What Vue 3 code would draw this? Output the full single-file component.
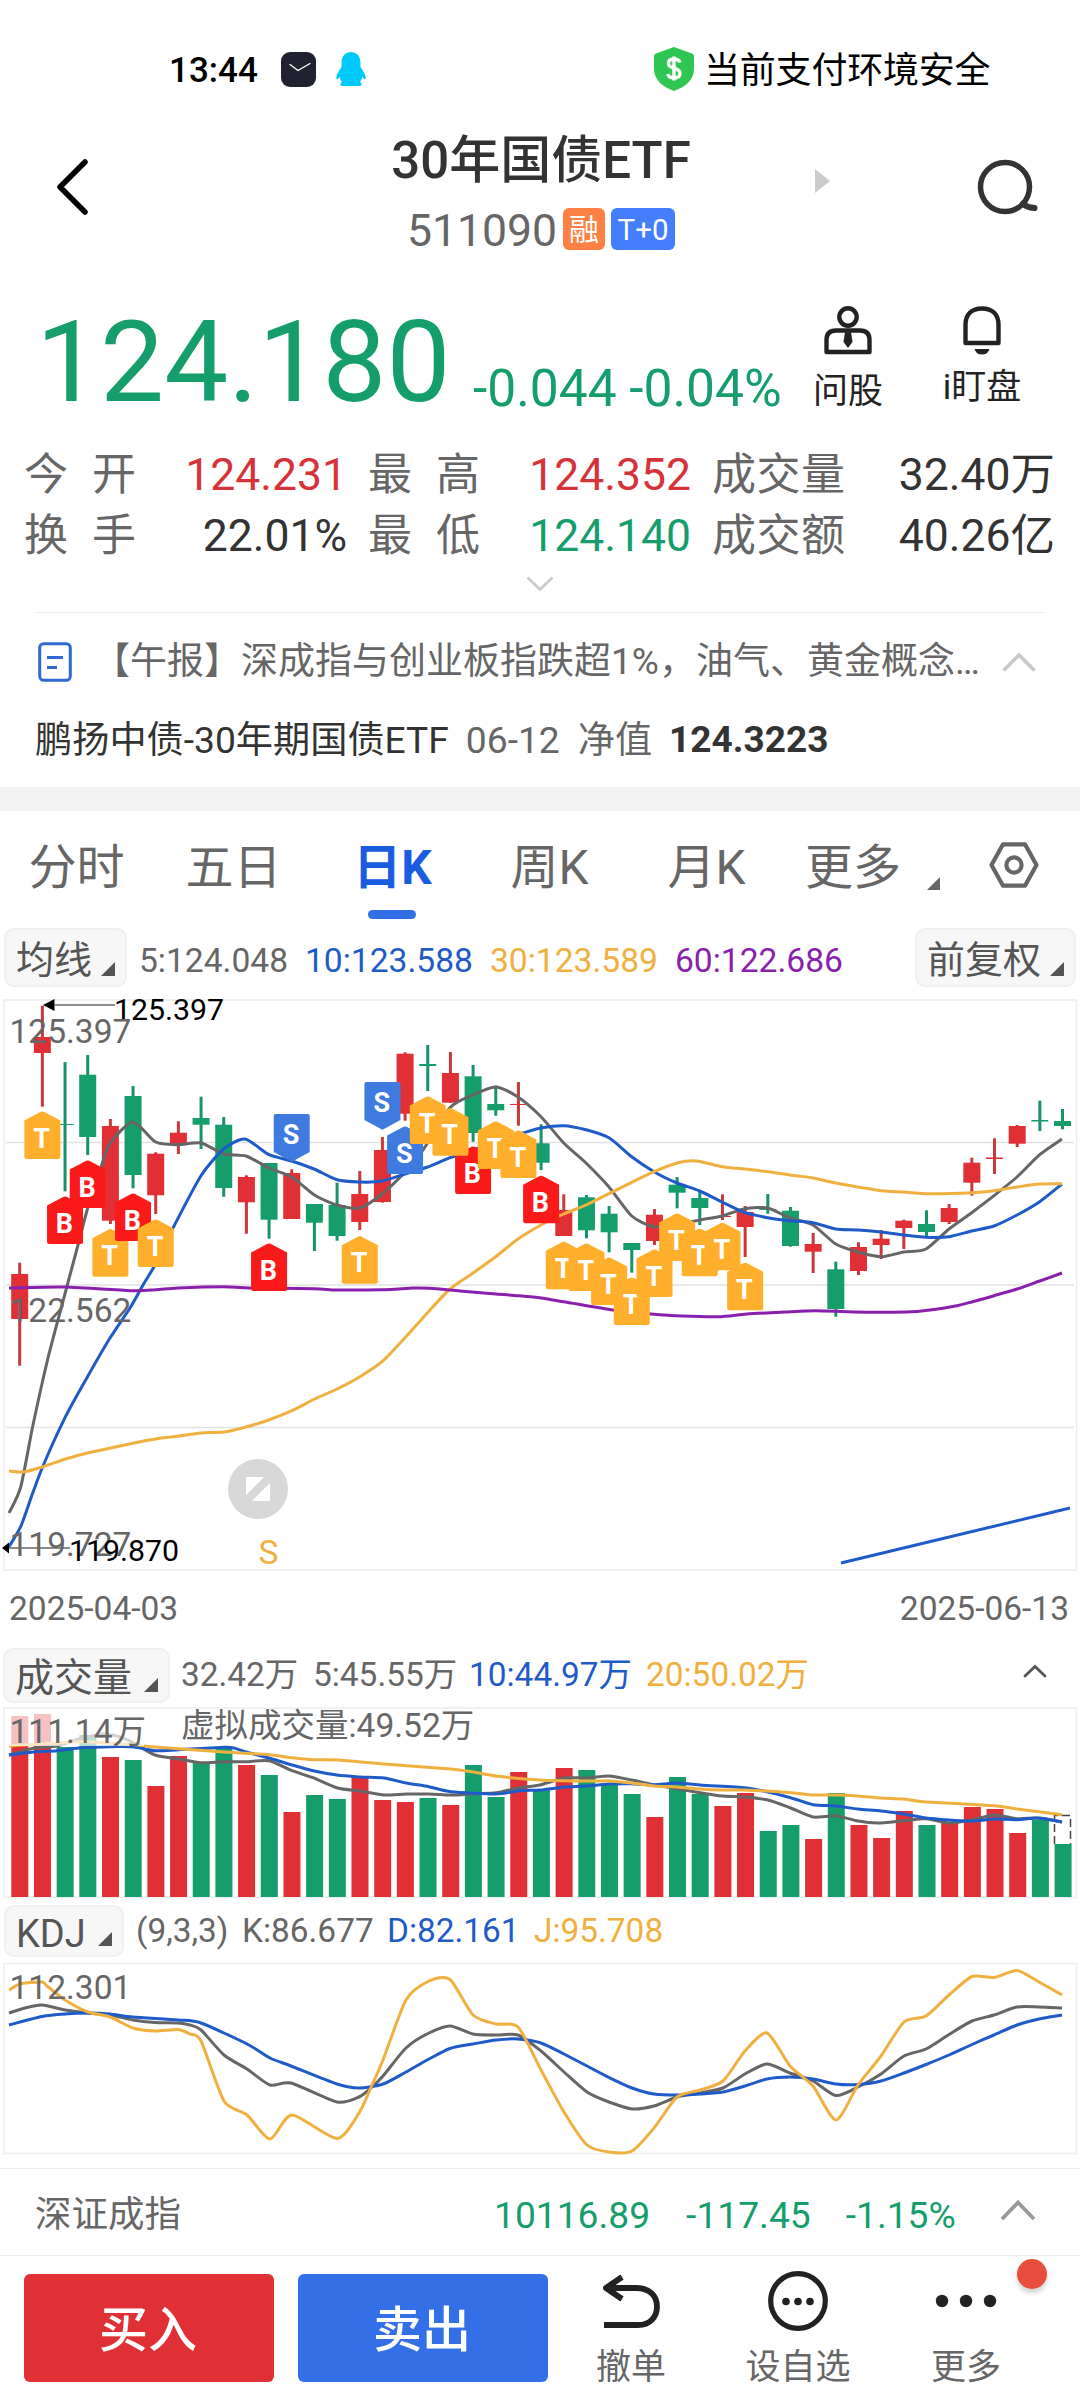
<script setup>
const STEP = 22.67
const FIRST = 19.7
const cx = (i) => FIRST + i * STEP

const stats = [
  { label: ['今', '开'], value: '124.231', tone: 'up' },
  { label: ['最', '高'], value: '124.352', tone: 'up' },
  { label: ['成', '交', '量'], value: '32.40万', tone: 'flat' },
  { label: ['换', '手'], value: '22.01%', tone: 'flat' },
  { label: ['最', '低'], value: '124.140', tone: 'down' },
  { label: ['成', '交', '额'], value: '40.26亿', tone: 'flat' },
]

const tabs = ['分时', '五日', '日K', '周K', '月K']

// [direction, high, body top, body bottom, low]
const candles = [
  ['r', 1262.7, 1274, 1319, 1365.7], ['r', 1005.7, 1037, 1053, 1106.7], ['g', 1062, 1124, 1125, 1191.3],
  ['g', 1055, 1074.7, 1137, 1155], ['r', 1119, 1126, 1220.7, 1224], ['g', 1086, 1096, 1175, 1188.3],
  ['r', 1152.3, 1153.7, 1195.3, 1214], ['r', 1121.3, 1132.7, 1143.7, 1154], ['g', 1096.7, 1118, 1124.7, 1149],
  ['g', 1117, 1124.7, 1188, 1196.7], ['r', 1175.3, 1177, 1202.3, 1233.7], ['g', 1163, 1163, 1219.7, 1238.7],
  ['r', 1169.3, 1173, 1219, 1219], ['g', 1204, 1204, 1222.7, 1251], ['g', 1182.7, 1205, 1236, 1240.7],
  ['r', 1171, 1194, 1222, 1230], ['r', 1137, 1150, 1202, 1202.7], ['r', 1052.3, 1053.7, 1113.7, 1120.7],
  ['g', 1045, 1064, 1066, 1091], ['r', 1052, 1073, 1102.7, 1102.7], ['g', 1065, 1076.3, 1133, 1141.7],
  ['g', 1085.7, 1104, 1110.3, 1115.7], ['r', 1082, 1104, 1105, 1125.7], ['g', 1124.3, 1143.3, 1162.7, 1170],
  ['r', 1194.3, 1210, 1236, 1236], ['g', 1195, 1197.3, 1230.3, 1238.3], ['g', 1206, 1213.7, 1232.3, 1252.3],
  ['g', 1243, 1243, 1250, 1272.7], ['r', 1209, 1214.7, 1241, 1245], ['g', 1177, 1184.7, 1192.7, 1208.3],
  ['g', 1190.7, 1198, 1208, 1225], ['r', 1194.3, 1216, 1217, 1220], ['r', 1206, 1212, 1227, 1257],
  ['g', 1194, 1209, 1210, 1213.7], ['g', 1207, 1210.7, 1246, 1246.7], ['r', 1233, 1244, 1251.7, 1273],
  ['g', 1261.7, 1269.3, 1309, 1316.7], ['r', 1242.3, 1247, 1271, 1275], ['r', 1230, 1238.7, 1245, 1259],
  ['r', 1219.7, 1220.7, 1228, 1249], ['g', 1210.3, 1224, 1232, 1237], ['r', 1204, 1208, 1222, 1224],
  ['r', 1157.7, 1162.7, 1182.7, 1195.7], ['r', 1138.3, 1157.5, 1159, 1174], ['r', 1125, 1126, 1143.7, 1147],
  ['g', 1100.7, 1120, 1121.5, 1131], ['g', 1109, 1121, 1126, 1129.3],
]

// [letter, candle index, top, points down]
const markers = [
  ['T', 1, 1111], ['B', 2, 1196], ['B', 3, 1160], ['T', 4, 1228.7], ['B', 5, 1193], ['T', 6, 1219],
  ['B', 11, 1243], ['S', 12, 1114, true], ['T', 15, 1235.7], ['S', 16, 1082, true], ['S', 17, 1126],
  ['B', 20, 1146], ['T', 18, 1096], ['T', 19, 1107.7], ['T', 21, 1121], ['T', 22, 1130], ['B', 23, 1175.3],
  ['T', 24, 1241.3], ['T', 25, 1243], ['T', 26, 1257], ['T', 27, 1277], ['T', 28, 1249], ['T', 29, 1213],
  ['T', 30, 1228.3], ['T', 31, 1222.3], ['T', 32, 1262.3],
]
const markerFill = { T: '#ffaf2b', B: '#fb1a1a', S: '#3f7ae0' }

const volumes = [
  ['r', 1716], ['r', 1714], ['g', 1747], ['g', 1735], ['r', 1757], ['g', 1760], ['r', 1786], ['r', 1756], ['g', 1762.7],
  ['g', 1748], ['r', 1765], ['g', 1775], ['r', 1812], ['g', 1795], ['g', 1799], ['r', 1777], ['r', 1800], ['r', 1802],
  ['g', 1798], ['r', 1805], ['g', 1765], ['g', 1797], ['r', 1772], ['g', 1789], ['r', 1768], ['g', 1770], ['g', 1783],
  ['g', 1794], ['r', 1817], ['g', 1777], ['g', 1794], ['r', 1806], ['r', 1793], ['g', 1831], ['g', 1825], ['r', 1839],
  ['g', 1793], ['r', 1825], ['r', 1838], ['r', 1811], ['g', 1825], ['r', 1823], ['r', 1807], ['r', 1809], ['r', 1833],
  ['g', 1820], ['g', 1844],
]

// Lightly smoothed line through a flat list of x,y pairs
function curve(flat) {
  const p = []
  for (let i = 0; i < flat.length; i += 2) p.push([flat[i], flat[i + 1]])
  const t = 0.12
  let d = `M${p[0][0]} ${p[0][1]}`
  for (let i = 0; i < p.length - 1; i++) {
    const a = p[i - 1] || p[i]
    const b = p[i]
    const c = p[i + 1]
    const e = p[i + 2] || c
    d += `C${(b[0] + (c[0] - a[0]) * t).toFixed(1)} ${(b[1] + (c[1] - a[1]) * t).toFixed(1)} ${(c[0] - (e[0] - b[0]) * t).toFixed(1)} ${(c[1] - (e[1] - b[1]) * t).toFixed(1)} ${c[0]} ${c[1]}`
  }
  return d
}

const GRAY = '#666'
const BLUE = '#1f5bc8'
const GOLD = '#f0b040'
const PURPLE = '#8a1fae'

const priceLines = [
  [GRAY, curve([9, 1513, 20.7, 1487, 33, 1425, 48, 1358, 62, 1305, 78, 1245, 87.7, 1208, 100, 1170, 110.3, 1143, 133, 1122, 155.7, 1142, 178, 1144.7, 201, 1143, 223.7, 1154, 246, 1156, 269, 1168, 291.7, 1177, 314, 1194.7, 337, 1205, 359.7, 1208, 382, 1194, 405, 1172, 423, 1150, 450, 1107.7, 473, 1095, 495.7, 1087, 518, 1097, 541, 1116.7, 563.7, 1143, 586, 1163, 609, 1187, 631.7, 1216, 654, 1226.7, 677, 1224, 699.7, 1220, 722, 1216, 745, 1208.7, 767.7, 1208, 790, 1218, 813, 1225, 835.7, 1244, 858, 1252, 881, 1256.7, 903.7, 1252, 926, 1249, 949, 1229, 971.7, 1212.7, 994, 1195.7, 1017, 1177, 1039.7, 1154.7, 1062, 1139])],
  [BLUE, curve([9, 1546.7, 20.7, 1526.7, 32, 1495, 43, 1466, 65.5, 1416.7, 87.5, 1376.7, 110, 1338, 130, 1308, 143, 1285, 154, 1266.7, 173, 1228, 201, 1175.7, 223.7, 1149, 245, 1139, 269, 1154.7, 291.7, 1161, 314, 1169, 337, 1179.7, 359.7, 1182, 382, 1181, 405, 1174, 427.7, 1167, 450, 1157.7, 473, 1150, 496, 1141, 523, 1133, 541, 1128, 563.7, 1125.7, 586, 1129.7, 609, 1137.7, 631.7, 1156.7, 654, 1171.7, 677, 1183, 699.7, 1191, 722, 1202, 745, 1212.7, 767.7, 1217.7, 790, 1220.7, 813, 1222.7, 835.7, 1229, 858, 1230, 881, 1232, 903.7, 1235, 926, 1237.3, 949, 1236.7, 971.7, 1231, 994, 1226, 1017, 1215, 1039.7, 1201.7, 1062, 1184])],
  [GOLD, curve([9, 1471, 22.7, 1472, 43, 1466.7, 65.5, 1459, 87.5, 1453, 134, 1443, 157, 1438.7, 179, 1436, 201, 1433, 224, 1432, 246, 1427, 268.6, 1420, 292, 1410.7, 314.7, 1399, 337, 1389, 359.5, 1377, 382, 1361.7, 405.6, 1337, 430, 1310, 450, 1289, 473, 1273, 495.7, 1256.7, 518, 1239, 541, 1225, 563.7, 1214, 586, 1205, 609, 1193.7, 631.7, 1182.3, 654, 1171.7, 677, 1163, 696.7, 1161, 722, 1166.7, 745, 1169, 767.7, 1171.7, 790, 1175, 813, 1178, 835.7, 1183, 881, 1190.7, 903.7, 1192, 926, 1193.7, 971.7, 1192.7, 994, 1190.7, 1017, 1187, 1039.7, 1184, 1062, 1183.7])],
  [PURPLE, curve([9, 1288, 65, 1287, 133, 1290.7, 155.7, 1289.7, 178, 1288, 223.7, 1286.7, 250, 1288, 314, 1288.7, 337, 1290, 382, 1289.7, 413, 1288, 430, 1288.3, 460, 1291, 496, 1294, 518, 1295.7, 541, 1298, 563.7, 1301.7, 613, 1310, 651, 1314, 682, 1316, 718, 1316.7, 747, 1314, 785, 1312, 816, 1310.7, 854, 1312, 906, 1312, 930, 1310, 957, 1305.7, 971.7, 1302, 994, 1295.7, 1017, 1289, 1039.7, 1281, 1062, 1273])],
  [BLUE, 'M841 1563L1070 1508'],
]

const volumeLines = [
  [GRAY, curve([9, 1755, 34, 1748, 57, 1746, 79, 1739, 103, 1734, 119, 1736.7, 134, 1743, 155, 1755, 179, 1759, 201, 1762.7, 224, 1761.7, 246, 1761.7, 269, 1760.7, 292, 1770.7, 313, 1777.7, 337.5, 1788, 360, 1791, 384, 1795, 406, 1794, 429, 1794, 451, 1795, 473.5, 1793.7, 496, 1792.7, 519, 1787.7, 540, 1785, 564, 1778, 586.5, 1778, 609, 1776, 631.6, 1780, 654, 1784.7, 677, 1788.7, 700, 1792.7, 722.5, 1796, 745, 1797, 768, 1800, 790.7, 1808, 813, 1817, 835.5, 1815.7, 858, 1821, 877.5, 1823, 903.6, 1820.7, 926, 1818.7, 949, 1823, 972, 1820, 994.5, 1815, 1017, 1818.7, 1039, 1818, 1062, 1822])],
  [BLUE, curve([9, 1755, 34, 1752, 57, 1750.7, 79, 1748, 110, 1746.7, 134, 1747, 155, 1750.7, 179, 1749.7, 224, 1747.3, 234, 1748, 246, 1752, 269, 1758, 292, 1765, 313, 1770.7, 337, 1775, 360, 1777, 384, 1778, 406, 1783, 429, 1786.7, 451, 1791.7, 496, 1794, 519, 1790.7, 540, 1790, 564, 1787, 586.5, 1786, 609, 1784, 631.6, 1783.7, 654, 1784.7, 677, 1783, 700, 1785, 745, 1787.7, 768, 1792, 790.7, 1797.7, 813, 1804.7, 835.5, 1806, 858, 1809, 881, 1811, 903.6, 1814, 926, 1818, 949, 1820, 972, 1821, 994.5, 1819, 1017, 1819.7, 1036, 1818, 1050, 1819.7, 1062, 1822])],
  [GOLD, curve([9, 1746, 79, 1741.7, 103, 1742.7, 138, 1745, 151.5, 1746.7, 224, 1752, 269, 1754.7, 292, 1757.7, 313, 1759.7, 337.5, 1760, 384, 1764, 451, 1769, 473.5, 1772, 496, 1776, 540, 1780, 586.5, 1781, 609, 1781, 631.6, 1783, 654, 1786, 677, 1787, 700, 1789, 722.5, 1790, 745, 1790, 790.7, 1792.7, 813, 1795, 835.5, 1795, 858, 1796, 881, 1798, 903.6, 1799, 926, 1802, 994.5, 1805.7, 1017, 1809, 1062, 1814.7])],
]

const kdjLines = [
  [GRAY, curve([9, 2013, 25, 2008, 42, 2005, 65, 2010, 88, 2013, 110, 2015, 133, 2020, 155, 2022.5, 178, 2023, 190, 2025, 201, 2030, 224, 2055, 247, 2069, 270, 2085, 291, 2083, 337, 2102, 359, 2097, 372, 2087, 383, 2076, 406, 2048, 429, 2033, 450, 2026, 473, 2034, 496, 2035, 518, 2035, 541, 2051, 564, 2072, 587, 2092, 609, 2102, 632, 2109, 654, 2106, 677, 2097, 700, 2093, 723, 2088, 745, 2074, 767, 2064, 790, 2073, 813, 2081, 836, 2095.5, 858, 2087, 881, 2074, 904, 2056, 926, 2049, 949, 2034.5, 972, 2021, 994, 2015, 1017, 2007, 1039, 2007, 1062, 2008])],
  [BLUE, curve([9, 2025, 42, 2016.5, 65, 2014, 88, 2013, 110, 2014, 133, 2017, 178, 2020, 201, 2023, 247, 2044, 270, 2058, 291, 2066, 337, 2084, 359, 2088, 383, 2084, 406, 2072, 429, 2059, 450, 2048.5, 473, 2044, 496, 2040, 518, 2039, 541, 2043, 564, 2054, 587, 2066, 609, 2077.5, 632, 2088, 654, 2094, 677, 2095, 700, 2094, 723, 2092, 745, 2086, 767, 2079, 790, 2077, 813, 2079, 836, 2084, 858, 2084.5, 881, 2081, 904, 2073, 926, 2064.5, 949, 2055, 972, 2044.5, 994, 2035, 1017, 2025, 1039, 2019, 1062, 2015])],
  [GOLD, curve([9, 1990, 20, 1984, 42, 1982, 47, 1986, 65, 2000, 88, 2012, 110, 2017, 133, 2028, 155, 2031, 178, 2029.5, 190, 2034, 201, 2041, 224, 2101, 247, 2115, 270, 2139, 292, 2115, 337, 2138.5, 359, 2113, 372, 2085, 383, 2060, 406, 2000, 429, 1981, 450, 1979.5, 473, 2015, 496, 2024, 518, 2027, 541, 2070, 564, 2112, 587, 2145, 609, 2152, 632, 2151, 654, 2128, 677, 2097, 700, 2090, 723, 2081, 745, 2051, 767, 2033, 790, 2066, 813, 2086, 836, 2120, 858, 2085, 881, 2056, 904, 2022, 926, 2016, 949, 1995, 972, 1976.5, 994, 1977.5, 1017, 1970.5, 1039, 1982, 1062, 1995])],
]

const fill = { r: '#e03035', g: '#159e6b' }
const wick = { r: '#c8383c', g: '#16936a' }
</script>

<template>
  <div class="screen">
    <div class="status">
      <span class="clock">13:44</span>
      <svg class="st-app" width="35" height="35" viewBox="0 0 35 35">
        <rect width="35" height="35" rx="9" fill="#20232f" />
        <path d="M9 12.500L17 18.500L29 11.500" fill="none" stroke="#fff" stroke-width="1.300" stroke-linecap="round" />
      </svg>
      <svg class="st-qq" width="30" height="34" viewBox="0 0 30 34">
        <path d="M15 0C8.500 0 5.500 5 5.500 11v4C3 18.500 .5 22.500 .3 25.500c-.1 2 1.200 2.300 3.400-.6.400 2 1.200 3.600 2.300 5-2 .9-2.200 4.100.5 4.100h17c2.700 0 2.500-3.200.5-4.100 1.100-1.400 1.900-3 2.300-5 2.200 2.900 3.500 2.600 3.400.6-.2-3-2.700-7-5.200-10.500v-4C24.500 5 21.500 0 15 0z" fill="#00cafc" />
      </svg>
      <svg class="st-shield" width="40" height="44" viewBox="0 0 40 44">
        <path d="M20 0L38 6.500Q40 7.300 40 9V22C40 33 31 40 20 44C9 40 0 33 0 22V9Q0 7.300 2 6.500Z" fill="#2fc552" />
        <path d="M26 15.500C25 12.800 22.800 12 20 12C16.600 12 14.500 13.800 14.500 16.600C14.500 23 26 19.600 26 26.200C26 29.400 23.500 31 20 31C16.800 31 14.600 29.800 13.700 27M20 9.500V33.500" fill="none" stroke="#fff" stroke-width="3.400" />
      </svg>
      <span class="safe">当前支付环境安全</span>
    </div>

    <header class="header">
      <svg class="back" width="36" height="64" viewBox="0 0 36 64">
        <path d="M31 7L6 32L31 57" fill="none" stroke="#000" stroke-width="5.500" stroke-linecap="round" stroke-linejoin="round" />
      </svg>
      <div class="title-box">
        <div class="title">30年国债ETF</div>
        <div class="sub">
          <span class="code">511090</span>
          <span class="badge orange">融</span>
          <span class="badge blue">T+0</span>
        </div>
      </div>
      <svg class="next" width="15" height="24" viewBox="0 0 15 24"><path d="M0 0L15 12L0 24Z" fill="#ccc" /></svg>
      <svg class="search" width="64" height="60" viewBox="0 0 64 60">
        <circle cx="29" cy="30" r="24.500" fill="none" stroke="#333" stroke-width="5.500" />
        <path d="M47 46.500Q50.500 50.500 58.500 51" fill="none" stroke="#333" stroke-width="6" stroke-linecap="round" />
      </svg>
    </header>

    <section class="quote">
      <span class="price">124.180</span>
      <span class="change">-0.044 -0.04%</span>
      <div class="tool ask">
        <svg width="48" height="50" viewBox="0 0 48 50">
          <circle cx="24" cy="11" r="8.700" fill="none" stroke="#222" stroke-width="4.400" />
          <path d="M2.500 46V34Q2.500 24.500 12 24.500H36Q45.500 24.500 45.500 34V46Z" fill="none" stroke="#222" stroke-width="4.400" stroke-linejoin="round" />
          <path d="M21 26H27L28.500 36L24 42L19.500 36Z" fill="#222" />
        </svg>
        <span>问股</span>
      </div>
      <div class="tool watch">
        <svg width="42" height="50" viewBox="0 0 42 50">
          <path d="M4.500 37V19C4.500 8 11 2.500 21 2.500S37.500 8 37.500 19V37Z" fill="none" stroke="#222" stroke-width="4.400" stroke-linejoin="round" />
          <path d="M13.500 43H28.500Q27 48.500 21 48.500T13.500 43Z" fill="#222" />
        </svg>
        <span>i盯盘</span>
      </div>
    </section>

    <section class="stats">
      <template v-for="(s, i) in stats" :key="i">
        <div class="s-label"><span v-for="c in s.label" :key="c">{{ c }}</span></div>
        <div class="s-value" :class="s.tone">{{ s.value }}</div>
      </template>
    </section>
    <div class="more-row">
      <svg width="30" height="18" viewBox="0 0 30 18"><path d="M2.500 2.500L15 14.500L27.500 2.500" fill="none" stroke="#ccc" stroke-width="2.800" /></svg>
    </div>

    <div class="rule"></div>
    <div class="news">
      <svg width="34" height="40" viewBox="0 0 34 40">
        <rect x="1.700" y="1.700" width="30.600" height="36.600" rx="4" fill="none" stroke="#3169d3" stroke-width="3" />
        <path d="M9 15.500H25M9 25.500H19" stroke="#3169d3" stroke-width="3" />
      </svg>
      <span class="news-text">【午报】深成指与创业板指跌超1%，油气、黄金概念…</span>
      <svg class="news-up" width="36" height="22" viewBox="0 0 36 22"><path d="M2.500 19.500L18 4L33.500 19.500" fill="none" stroke="#c8c8c8" stroke-width="3.600" /></svg>
    </div>
    <div class="fund">
      <span class="f-name">鹏扬中债-30年期国债ETF</span>
      <span class="f-date">06-12</span>
      <span class="f-nav">净值</span>
      <b>124.3223</b>
    </div>
    <div class="band"></div>

    <nav class="tabs">
      <div v-for="t in tabs" :key="t" class="tab" :class="{ on: t === '日K' }">{{ t }}</div>
      <div class="tab-more">更多</div>
      <svg class="tab-tri" width="13" height="13" viewBox="0 0 13 13"><path d="M13 0V13H0Z" fill="#666" /></svg>
      <svg class="hex" width="50" height="46" viewBox="0 0 50 46">
        <path d="M14 2.300H36L47.500 23L36 43.700H14L2.500 23Z" fill="none" stroke="#666" stroke-width="4.200" stroke-linejoin="round" />
        <circle cx="25" cy="23" r="7.600" fill="none" stroke="#666" stroke-width="4.200" />
      </svg>
    </nav>

    <div class="legend ma">
      <span class="pill p1">均线<i></i></span>
      <span class="lg1">5:124.048</span>
      <span class="lg2 c-blue">10:123.588</span>
      <span class="lg3 c-gold">30:123.589</span>
      <span class="lg4 c-purple">60:122.686</span>
      <span class="pill p2">前复权<i></i></span>
    </div>

    <svg class="chart" width="1080" height="590" viewBox="0 990 1080 590">
      <rect x="4" y="1000" width="1072.500" height="570" fill="none" stroke="#eee" stroke-width="1.600" />
      <path d="M6 1142.500H1074M6 1285H1074M6 1427.500H1074" stroke="#e2e2e2" stroke-width="1.300" />
      <circle cx="258" cy="1489" r="30" fill="#d8d8d8" />
      <path d="M246 1477H264L246 1495ZM270 1483V1501H252Z" fill="#fff" />
      <text x="258.500" y="1564" class="ax" :fill="GOLD">S</text>
      <g v-for="(c, i) in candles" :key="i">
        <rect :x="cx(i) - 1.500" :y="c[1]" width="3" :height="c[4] - c[1]" :fill="wick[c[0]]" />
        <rect :x="cx(i) - 8.500" :y="c[2]" width="17" :height="c[3] - c[2]" :fill="fill[c[0]]" />
      </g>
      <path v-for="(l, i) in priceLines" :key="i" :d="l[1]" fill="none" :stroke="l[0]" stroke-width="3" stroke-linejoin="round" />
      <g v-for="(m, i) in markers" :key="i" :transform="`translate(${cx(m[1])} ${m[2]})`">
        <path v-if="m[3]" d="M-16 0H16Q18 0 18 2V38L1.500 47Q0 48 -1.500 47L-18 38V2Q-18 0 -16 0Z" :fill="markerFill[m[0]]" />
        <path v-else d="M-16 48H16Q18 48 18 46V9.500L1.500 .8Q0 0 -1.500 .8L-18 9.500V46Q-18 48 -16 48Z" :fill="markerFill[m[0]]" />
        <text x="-0.700" :y="m[3] ? 30 : 36.500" class="mk" text-anchor="middle">{{ m[0] }}</text>
      </g>
      <path d="M43 1005L54.500 999V1011Z" fill="#000" />
      <path d="M54 1005H115" stroke="#666" stroke-width="1.600" />
      <text x="114" y="1020" class="tag">125.397</text>
      <text x="9.500" y="1042.500" class="ax" fill="#666">125.397</text>
      <text x="9.500" y="1322" class="ax" fill="#666">122.562</text>
      <text x="9.500" y="1555.500" class="ax" fill="#666">119.727</text>
      <path d="M2 1548L9 1542.500V1553.500Z" fill="#000" />
      <path d="M9 1548H70" stroke="#666" stroke-width="1.600" />
      <text x="69" y="1560.500" class="tag">119.870</text>
    </svg>

    <div class="dates"><span>2025-04-03</span><span>2025-06-13</span></div>

    <div class="legend vol">
      <span class="pill p3">成交量<i></i></span>
      <span class="v1">32.42万</span>
      <span class="v2">5:45.55万</span>
      <span class="v3 c-blue">10:44.97万</span>
      <span class="v4 c-gold">20:50.02万</span>
      <svg class="v-up" width="24" height="14" viewBox="0 0 24 14"><path d="M2 12L12 2.500L22 12" fill="none" stroke="#555" stroke-width="2.800" stroke-linecap="round" /></svg>
    </div>

    <svg class="chart" width="1080" height="196" viewBox="0 1704 1080 196">
      <rect x="4" y="1708" width="1072.500" height="189.500" fill="none" stroke="#eee" stroke-width="1.600" />
      <rect v-for="(v, i) in volumes" :key="i" :x="11.300 + i * 22.680" :y="v[1]" width="17" :height="1897 - v[1]" :fill="fill[v[0]]" />
      <path d="M1054.500 1844V1815.500H1070.500V1844" fill="none" stroke="#444" stroke-width="1.500" stroke-dasharray="8 4" />
      <path v-for="(l, i) in volumeLines" :key="i" :d="l[1]" fill="none" :stroke="l[0]" stroke-width="3" stroke-linejoin="round" />
      <rect x="5" y="1709" width="139" height="37" fill="#fff" opacity="0.7" />
      <text x="9.500" y="1742.500" class="ax" fill="#666">111.14万</text>
      <text x="181" y="1736.500" class="ax" fill="#666">虚拟成交量:49.52万</text>
    </svg>

    <div class="legend kdj">
      <span class="pill p4">KDJ<i></i></span>
      <span class="k0">(9,3,3)</span>
      <span class="k1">K:86.677</span>
      <span class="k2 c-blue">D:82.161</span>
      <span class="k3 c-gold">J:95.708</span>
    </div>

    <svg class="chart" width="1080" height="208" viewBox="0 1960 1080 208">
      <rect x="4" y="1963.500" width="1072.500" height="190" fill="none" stroke="#eee" stroke-width="1.600" />
      <path v-for="(l, i) in kdjLines" :key="i" :d="l[1]" fill="none" :stroke="l[0]" stroke-width="3" stroke-linejoin="round" />
      <text x="9.500" y="1998.500" class="ax" fill="#666">112.301</text>
    </svg>

    <div class="index">
      <span class="i-name">深证成指</span>
      <span>10116.89</span>
      <span class="i2">-117.45</span>
      <span class="i3">-1.15%</span>
      <svg width="36" height="22" viewBox="0 0 36 22"><path d="M2 20L18 3.500L34 20" fill="none" stroke="#999" stroke-width="3.800" /></svg>
    </div>

    <footer class="bar">
      <button class="buy">买入</button>
      <button class="sell">卖出</button>
      <div class="act a1">
        <svg width="62" height="62" viewBox="0 0 62 62">
          <path d="M22 7L6 18L22 29M7 18H36C50 18 57 26 57 36.500S50 55 38 55H4" fill="none" stroke="#222" stroke-width="5.800" stroke-linejoin="round" />
        </svg>
        <span>撤单</span>
      </div>
      <div class="act a2">
        <svg width="62" height="62" viewBox="0 0 62 62">
          <circle cx="31" cy="31" r="27.300" fill="none" stroke="#222" stroke-width="5.200" />
          <circle cx="19" cy="31.500" r="3.800" fill="#222" /><circle cx="31" cy="31.500" r="3.800" fill="#222" /><circle cx="43" cy="31.500" r="3.800" fill="#222" />
        </svg>
        <span>设自选</span>
      </div>
      <div class="act a3">
        <svg width="62" height="62" viewBox="0 0 62 62">
          <circle cx="7" cy="31" r="6.200" fill="#222" /><circle cx="31" cy="31" r="6.200" fill="#222" /><circle cx="55" cy="31" r="6.200" fill="#222" />
        </svg>
        <span>更多</span>
        <em class="dot"></em>
      </div>
    </footer>
  </div>
</template>

<style>
body { background: #fff; }
</style>

<style scoped>
.screen {
  width: 1080px; height: 2400px; overflow: hidden; background: #fff; color: #333;
  font-family: Roboto, "Noto Sans CJK SC", sans-serif;
}
svg { display: block; flex: none; }
span, b { white-space: nowrap; }

.status { display: flex; align-items: center; height: 130px; padding: 8px 0 0 169px; box-sizing: border-box; color: #000; }
.clock { width: 112px; font-size: 35px; font-weight: 500; line-height: 40px; padding-top: 3px; }
.st-qq { margin-left: 20px; }
.st-shield { margin-left: 288px; }
.safe { margin-left: 10px; font-size: 36px; line-height: 40px; padding-top: 4px; letter-spacing: -0.2px; }

.header { display: flex; align-items: flex-start; height: 150px; }
.back { margin: 25px 0 0 54px; }
.title-box { width: 700px; margin-left: 101px; display: flex; flex-direction: column; align-items: center; }
.title { height: 60px; line-height: 61px; font-size: 51px; font-weight: 500; }
.sub { display: flex; align-items: center; height: 42px; margin-top: 18px; }
.code { font-size: 44.500px; line-height: 42px; color: #666; padding-top: 4px; }
.badge { height: 42px; border-radius: 6px; margin-left: 6px; color: #fff; font-size: 30px; line-height: 44px; text-align: center; }
.badge.blue { font-size: 29.500px; }
.orange { width: 42px; background: #fd8045; }
.blue { width: 64px; background: #447efc; }
.next { margin: 39px 0 0 -76px; }
.search { margin: 27px 0 0 146px; }

.quote { display: flex; align-items: flex-start; height: 160px; }
.price { width: 434px; padding-left: 36px; font-size: 114px; line-height: 164px; color: #159e6b; }
.change { width: 333px; margin-left: 3px; font-size: 51.500px; line-height: 217px; color: #159e6b; }
.tool { display: flex; flex-direction: column; align-items: center; width: 120px; margin-top: 26px; color: #222; font-size: 35px; }
.tool span { line-height: 44px; margin-top: 14px; }
.ask { margin-left: -18px; }
.watch { margin-left: 14px; }
.watch span { margin-top: 10px; }

.stats {
  display: grid; grid-template-columns: 112px 209px 135px 211px 154px 210px; grid-auto-rows: 61px;
  padding: 5px 0 0 24px; font-size: 44px; line-height: 61px;
}
.s-label { display: flex; justify-content: space-between; color: #666; }
.s-label:nth-child(6n + 3) { padding-left: 23px; }
.s-label:nth-child(6n + 5) { padding-left: 21px; }
.s-value { text-align: right; font-size: 44.500px; }
.s-value:nth-child(6n + 2) { position: relative; left: 2px; }
.up { color: #d6323a; }
.down { color: #159e6b; }
.flat { color: #333; }
.more-row { height: 45px; display: flex; justify-content: center; }
.more-row svg { margin-top: 8px; }

.rule { height: 1px; margin: 0 35px; background: #ececec; }
.news { display: flex; align-items: center; height: 98px; padding-left: 38px; }
.news-text { margin-left: 21px; width: 891px; font-size: 37px; line-height: 40px; color: #666; }
.news-up { margin-left: 17px; }
.fund { display: flex; height: 76px; padding-left: 35px; font-size: 37.200px; line-height: 58px; color: #333; }
.f-date, .f-nav { color: #666; }
.f-date { margin-left: 17px; }
.f-nav { margin-left: 18px; }
.fund b { margin-left: 17px; font-weight: 700; font-size: 37px; }
.band { height: 24px; background: #f3f3f3; }

.tabs { display: flex; align-items: flex-start; height: 114px; font-size: 48px; line-height: 114px; color: #666; }
.tab { position: relative; width: 157px; text-align: center; }
.tab:nth-child(-n + 2) { left: -2px; }
.on { color: #1a5ce0; font-weight: 700; }
.on::after { content: ""; position: absolute; left: 54px; top: 99px; width: 48px; height: 9px; border-radius: 5px; background: #326fe6; }
.tab-more { margin-left: 20px; }
.tab-tri { margin: 66px 0 0 26px; }
.hex { margin: 31px 0 0 49px; }

.legend { display: flex; font-size: 33.600px; color: #666; }
.ma { height: 65px; line-height: 72px; }
.pill {
  position: relative; box-sizing: border-box; flex: none; border: 2px solid #f0f0f0; border-radius: 10px;
  background: #f7f7f7; color: #555; font-size: 38px;
}
.pill i { position: absolute; right: 10px; bottom: 9px; width: 14px; height: 14px; background: #555; clip-path: polygon(100% 0, 100% 100%, 0 100%); }
.p1 { width: 123px; height: 59px; margin: 3px 0 0 4px; padding-left: 10px; line-height: 60px; }
.p2 { width: 161px; height: 59px; margin: 3px 0 0 72px; padding-left: 10px; line-height: 60px; }
.lg1 { width: 166px; margin-left: 12px; }
.lg2 { width: 185px; }
.lg3 { width: 185px; }
.lg4 { width: 168px; }
.c-blue { color: #1f5bc8; }
.c-gold { color: #f0b040; }
.c-purple { color: #8a1fae; }

.chart text { font-family: Roboto, "Noto Sans CJK SC", sans-serif; }
.ax { font-size: 33.500px; }
.tag { font-size: 30.300px; fill: #000; }
.mk { font-size: 27px; font-weight: 700; fill: #fff; }

.dates { display: flex; justify-content: space-between; height: 60px; padding: 0 11px 0 9px; font-size: 33.500px; line-height: 58px; color: #666; }

.vol { height: 64px; font-size: 33.400px; line-height: 70px; }
.p3 { width: 167px; height: 55px; margin: 8px 0 0 3px; padding-left: 10px; font-size: 39px; line-height: 57px; }
.v1 { width: 132px; margin-left: 11px; }
.v2 { width: 156px; }
.v3 { width: 177px; }
.v4 { width: 180px; }
.v-up { margin: 24px 0 0 197px; }

.kdj { height: 60px; font-size: 33.400px; line-height: 62px; }
.p4 { width: 120px; height: 52px; margin: 5px 0 0 4px; padding-left: 10px; line-height: 54px; }
.k0 { width: 106px; margin-left: 12px; }
.k1 { width: 145px; }
.k2 { width: 147px; }

.index { display: flex; align-items: center; height: 87px; box-sizing: border-box; border-top: 1px solid #eee; padding: 6px 0 0 35px; font-size: 37.200px; line-height: 80px; color: #159e6b; }
.i-name { width: 459px; font-size: 36.500px; color: #666; }
.i2 { margin-left: 36px; }
.i3 { margin-left: 35px; }
.index svg { position: relative; margin-left: auto; margin-right: 44px; top: -5px; }

.bar { display: flex; height: 145px; box-sizing: border-box; border-top: 1px solid #eee; padding-left: 24px; }
.bar button { width: 250px; height: 108px; margin: 18px 24px 0 0; border: 0; border-radius: 6px; padding: 5px 2px 0 0; color: #fff; font: 500 49px/103px Roboto, "Noto Sans CJK SC", sans-serif; }
.buy { background: #e03035; }
.sell { background: #336fe6; }
.act { position: relative; display: flex; flex-direction: column; align-items: center; width: 120px; margin-top: 14px; font-size: 35px; line-height: 40px; color: #666; }
.act span { margin-top: 16px; }
.a1 { margin-left: -1px; }
.a2 { margin-left: 47px; }
.a3 { margin-left: 48px; }
.dot { position: absolute; right: -21px; top: -11px; width: 30px; height: 30px; border-radius: 50%; background: #e74c3c; box-shadow: 0 4px 5px rgba(0, 0, 0, 0.18); }
</style>
